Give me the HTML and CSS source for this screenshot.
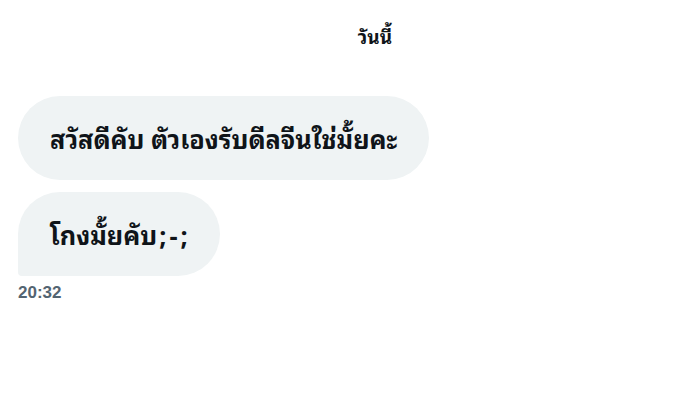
FILE: index.html
```html
<!DOCTYPE html>
<html>
<head>
<meta charset="utf-8">
<link rel="stylesheet" href="styles.css">
</head>
<body>
<div class="chat">
  <div class="day">วันนี้</div>
  <div class="messages">
    <div class="bubble">สวัสดีคับ ตัวเองรับดีลจีนใช่มั้ยคะ</div>
    <div class="bubble last">โกงมั้ยคับ<span class="punct">;-;</span></div>
    <div class="time">20:32</div>
  </div>
</div>
</body>
</html>
```
FILE: styles.css
```css
html, body {
  margin: 0;
  padding: 0;
  background: #ffffff;
}
body {
  font-family: "Noto Sans Thai Looped", "Noto Sans", sans-serif;
  color: #0f1419;
}
.chat {
  width: 694px;
  height: 404px;
  padding: 20px 18px 0 18px;
  box-sizing: border-box;
}
.day {
  display: flex;
  justify-content: center;
  padding-left: 56px;
  font-size: 19px;
  font-weight: 700;
  line-height: 32px;
}
.messages {
  display: flex;
  flex-direction: column;
  align-items: flex-start;
  gap: 12px;
  margin-top: 44px;
}
.bubble {
  background: #eff3f4;
  font-size: 25.3px;
  font-weight: 700;
  line-height: 32px;
  padding: 26px 32px;
  border-radius: 42px;
  white-space: nowrap;
}
.bubble.last {
  border-bottom-left-radius: 4px;
  padding-right: 29px;
}
.punct {
  margin-left: 2px;
  letter-spacing: 3px;
}
.time {
  margin-top: -4px;
  font-family: "Liberation Sans", sans-serif;
  font-size: 17px;
  font-weight: 700;
  color: #536471;
  line-height: 18px;
}
```
